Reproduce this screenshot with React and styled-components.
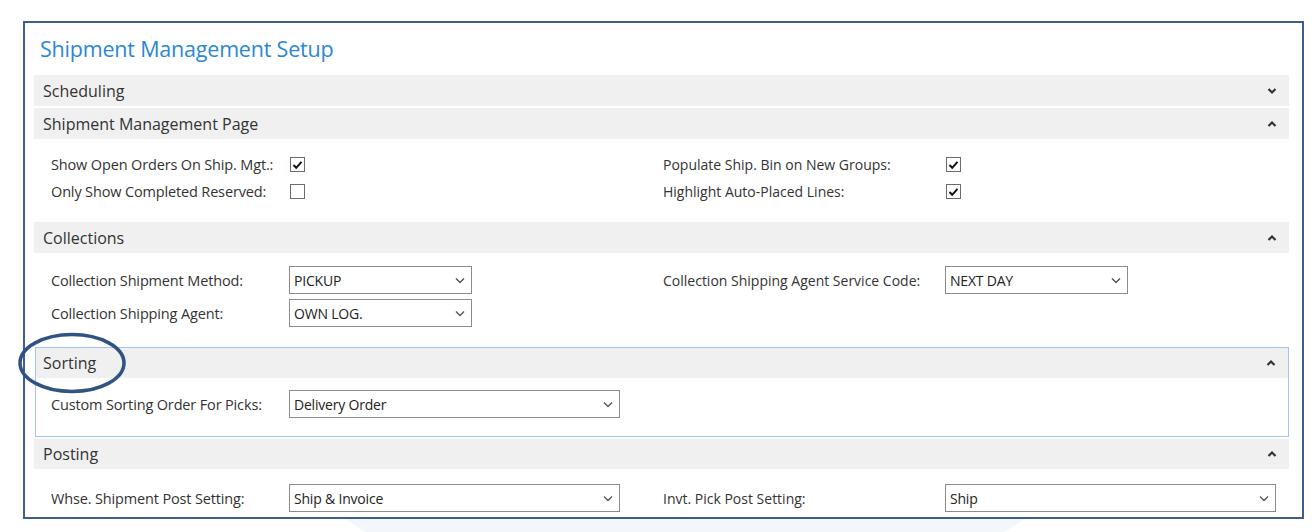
import React from 'react';
import styled, { createGlobalStyle } from 'styled-components';

const GlobalStyle = createGlobalStyle`
  html, body {
    margin: 0;
    padding: 0;
    background: #ffffff;
  }
  body {
    font-family: "Open Sans", "Noto Sans", "Liberation Sans", sans-serif;
    color: #333333;
  }
`;

const Page = styled.div`
  width: 1315px;
  height: 532px;
  overflow: hidden;
  padding-top: 21px;
  box-sizing: border-box;
`;

const Frame = styled.div`
  position: relative;
  margin-left: 23px;
  width: 1281px;
  height: 498px;
  box-sizing: border-box;
  border: 2px solid #3d5d8e;
  padding: 12px 13px 0 9px;
`;

const Title = styled.h1`
  margin: 0 0 12px 6px;
  font-size: 21.5px;
  font-weight: 400;
  line-height: 28px;
  color: #2b87d6;
  letter-spacing: -0.2px;
`;

const Section = styled.div`
  margin-bottom: 2px;
  box-sizing: border-box;
  border: ${p => (p.focused ? '1px solid #9cc4f6' : 'none')};
  margin-left: ${p => (p.focused ? '1px' : '0')};
`;

const Header = styled.div`
  display: flex;
  align-items: center;
  justify-content: space-between;
  height: ${p => p.h || 31}px;
  padding: 0 12px 0 ${p => (p.focused ? 7 : 9)}px;
  background: #f0f0f0;
  font-size: 16px;
  color: #333333;
`;

const Chevron = styled.svg`
  width: 10px;
  height: 8px;
`;

const Body = styled.div`
  display: grid;
  grid-template-columns: ${p => (p.focused ? 253 : 255)}px 374px 282px 1fr;
  row-gap: ${p => p.gap || 0}px;
  padding: ${p => p.pad || '0'};
  align-items: center;
`;

const Label = styled.div`
  font-size: ${p => (p.right ? 14 : 14.5)}px;
  color: #333333;
  padding-left: ${p => (p.right ? 0 : p.inset || 17)}px;
  letter-spacing: ${p => (p.right ? '0' : '-0.15px')};
  white-space: nowrap;
`;

const Cell = styled.div`
  display: flex;
  align-items: center;
  height: ${p => p.h || 27}px;
`;

const Box = styled.div`
  width: 13px;
  height: 13px;
  border: 1px solid #6b6b6b;
  background: #fff;
  display: flex;
  align-items: center;
  justify-content: center;
  margin-left: 1px;
`;

const Select = styled.div`
  display: flex;
  align-items: center;
  justify-content: space-between;
  width: ${p => p.w}px;
  height: 28px;
  box-sizing: border-box;
  border: 1px solid #8c8c8c;
  background: #fff;
  padding: 0 6px 0 4px;
  font-size: 14px;
  color: #222;
  letter-spacing: -0.2px;
`;

const Ring = styled.svg`
  position: absolute;
  left: -8px;
  top: 309px;
  width: 110px;
  height: 62px;
  pointer-events: none;
`;

const Shade = styled.div`
  margin-left: 345px;
  width: 680px;
  height: 13px;
  background: #f3f7fc;
  clip-path: polygon(0 0, 100% 0, 97% 100%, 3% 100%);
`;

const Up = () => (
  <Chevron viewBox="0 0 10 8">
    <path d="M1.5 6 L5 2.5 L8.5 6" fill="none" stroke="#333" strokeWidth="2.2" />
  </Chevron>
);

const Down = () => (
  <Chevron viewBox="0 0 10 8">
    <path d="M1.5 2 L5 5.5 L8.5 2" fill="none" stroke="#333" strokeWidth="2.2" />
  </Chevron>
);

const Check = ({ on }) => (
  <Box>
    {on && (
      <svg width="11" height="10" viewBox="0 0 11 10">
        <path d="M1.5 5 L4.2 7.8 L9.5 1.8" fill="none" stroke="#111" strokeWidth="2" />
      </svg>
    )}
  </Box>
);

const Drop = ({ w, value }) => (
  <Select w={w}>
    <span>{value}</span>
    <svg width="10" height="7" viewBox="0 0 10 7">
      <path d="M1 1.5 L5 5.5 L9 1.5" fill="none" stroke="#555" strokeWidth="1.4" />
    </svg>
  </Select>
);

export default function App() {
  return (
    <Page>
      <GlobalStyle />
      <Frame>
        <Title>Shipment Management Setup</Title>

        <Section>
          <Header>
            <span>Scheduling</span>
            <Down />
          </Header>
        </Section>

        <Section>
          <Header>
            <span>Shipment Management Page</span>
            <Up />
          </Header>
          <Body pad="12px 0 15px 0">
            <Label>Show Open Orders On Ship. Mgt.:</Label>
            <Cell><Check on /></Cell>
            <Label right>Populate Ship. Bin on New Groups:</Label>
            <Cell><Check on /></Cell>
            <Label>Only Show Completed Reserved:</Label>
            <Cell><Check /></Cell>
            <Label right>Highlight Auto-Placed Lines:</Label>
            <Cell><Check on /></Cell>
          </Body>
        </Section>

        <Section>
          <Header>
            <span>Collections</span>
            <Up />
          </Header>
          <Body pad="13px 0 18px 0" gap={5}>
            <Label>Collection Shipment Method:</Label>
            <Cell h={28}><Drop w={183} value="PICKUP" /></Cell>
            <Label right>Collection Shipping Agent Service Code:</Label>
            <Cell h={28}><Drop w={183} value="NEXT DAY" /></Cell>
            <Label>Collection Shipping Agent:</Label>
            <Cell h={28}><Drop w={183} value="OWN LOG." /></Cell>
            <Label right />
            <Cell h={28} />
          </Body>
        </Section>

        <Section focused>
          <Header focused h={30}>
            <span>Sorting</span>
            <Up />
          </Header>
          <Body focused pad="12px 0 18px 0">
            <Label inset={15}>Custom Sorting Order For Picks:</Label>
            <Cell h={28}><Drop w={331} value="Delivery Order" /></Cell>
          </Body>
        </Section>

        <Section>
          <Header h={30}>
            <span>Posting</span>
            <Up />
          </Header>
          <Body pad="15px 0 0 0">
            <Label>Whse. Shipment Post Setting:</Label>
            <Cell h={28}><Drop w={331} value="Ship &amp; Invoice" /></Cell>
            <Label right>Invt. Pick Post Setting:</Label>
            <Cell h={28}><Drop w={331} value="Ship" /></Cell>
          </Body>
        </Section>

        <Ring viewBox="0 0 110 62">
          <ellipse cx="55" cy="31" rx="52" ry="28.5" fill="none" stroke="#2f5383" strokeWidth="3.5" />
        </Ring>
      </Frame>
      <Shade />
    </Page>
  );
}
